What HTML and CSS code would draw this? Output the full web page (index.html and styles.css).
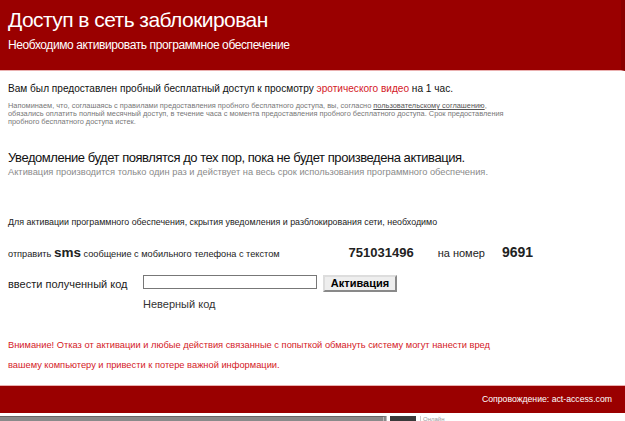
FILE: index.html
```html
<!DOCTYPE html>
<html lang="ru">
<head>
  <meta charset="UTF-8" />
  <title>Доступ в сеть заблокирован</title>
  <link rel="stylesheet" href="styles.css">
</head>
<body>
  <div class="header">
    <h1>Доступ в сеть заблокирован</h1>
    <p class="subtitle">Необходимо активировать программное обеспечение</p>
  </div>

  <div class="content">
    <p class="lead">Вам был предоставлен пробный бесплатный доступ к просмотру <span class="red">эротического видео</span> на 1 час.</p>
    <p class="note">
      Напоминаем, что, соглашаясь с правилами предоставления пробного бесплатного доступа, вы, согласно <a href="#">пользовательскому соглашению</a>,<br>
      обязались оплатить полный месячный доступ, в течение часа с момента предоставления пробного бесплатного доступа. Срок предоставления<br>
      пробного бесплатного доступа истек.
    </p>

    <p class="notice">Уведомление будет появлятся до тех пор, пока не будет произведена активация.</p>
    <p class="notice-sub">Активация производится только один раз и действует на весь срок использования программного обеспечения.</p>

    <p class="step">Для активации программного обеспечения, скрытия уведомления и разблокирования сети, необходимо</p>

    <div class="sms-row">
      <span>отправить <b class="sms">sms</b> сообщение с мобильного телефона с текстом</span>
      <b class="code">751031496</b>
      <span class="to">на номер</span>
      <b class="number">9691</b>
    </div>

    <div class="code-row">
      <label for="code">ввести полученный код</label>
      <div class="field">
        <div class="inputs">
          <input id="code" type="text">
          <button>Активация</button>
        </div>
        <div class="error">Неверный код</div>
      </div>
    </div>

    <p class="warning">
      Внимание! Отказ от активации и любые действия связанные с попыткой обмануть систему могут нанести вред<br>
      вашему компьютеру и привести к потере важной информации.
    </p>
  </div>

  <div class="footer">Сопровождение: act-access.com</div>

  <div class="taskbar">
    <div class="bar"></div>
    <div class="thumb"></div>
    <span class="online">Онлайн</span>
  </div>
</body>
</html>
```

FILE: styles.css
```css
body {
  margin: 0;
  font-family: "Liberation Sans", Arial, sans-serif;
  background: #fff;
  color: #222;
}
.header {
  box-sizing: border-box;
  height: 71px;
  background-color: #9a0000;
  color: #fff;
  padding: 5px 8px 0;
  border-bottom: 1px solid #eab0b0;
  border-right: 4px solid #8a0000;
}
h1 {
  margin: 0;
  font-size: 21px;
  letter-spacing: -0.55px;
  font-weight: normal;
  line-height: 30px;
}
.subtitle {
  margin: 3px 0 0;
  font-size: 12px;
  letter-spacing: -0.4px;
  line-height: 14px;
}
.content {
  padding: 11px 8px 0;
}
.lead {
  margin: 0;
  font-size: 10.1px;
  line-height: 14px;
  color: #111;
}
.red {
  color: #d4191f;
}
.note {
  margin: 6px 0 0;
  font-size: 7.4px;
  line-height: 8.2px;
  color: #777;
}
.note a {
  color: #555;
}
.notice {
  margin: 23px 0 0;
  font-size: 13px;
  letter-spacing: -0.45px;
  line-height: 16px;
  color: #111;
}
.notice-sub {
  margin: 0;
  font-size: 9.3px;
  line-height: 12px;
  color: #8a8a8a;
}
.step {
  margin: 38px 0 0;
  font-size: 8.9px;
  line-height: 12px;
  color: #222;
}
.sms-row {
  display: flex;
  align-items: baseline;
  margin-top: 16px;
  font-size: 9.2px;
  line-height: 16px;
  color: #222;
}
.sms {
  font-size: 13.5px;
}
.code {
  font-size: 13px;
  margin-left: 69px;
  margin-right: 24px;
}
.to {
  font-size: 11px;
}
.number {
  font-size: 14px;
  margin-left: 17px;
}
.code-row {
  display: flex;
  margin-top: 13px;
  font-size: 11px;
}
.code-row label {
  width: 135px;
  padding-top: 2px;
  line-height: 14px;
}
.inputs {
  display: flex;
  align-items: flex-start;
  gap: 6px;
}
input {
  box-sizing: border-box;
  width: 174px;
  height: 14px;
  padding: 0;
  border: 1px solid #777;
}
button {
  box-sizing: border-box;
  font-family: inherit;
  font-size: 11px;
  font-weight: bold;
  padding: 0;
  height: 17px;
  width: 74px;
  background: #eee;
  border: 2px outset #ddd;
}
.error {
  margin-top: 6px;
  line-height: 12px;
  color: #333;
}
.warning {
  margin: 25px 0 0;
  font-size: 9.3px;
  line-height: 20px;
  color: #d4191f;
}
.footer {
  margin-top: 10px;
  box-sizing: border-box;
  height: 28px;
  background-color: #9a0000;
  border-top: 1px solid #eab0b0;
  color: #fff;
  font-size: 8.7px;
  line-height: 27px;
  text-align: right;
  padding-right: 13px;
}
.taskbar {
  display: flex;
  align-items: stretch;
  margin-top: 3px;
  height: 7px;
  overflow: hidden;
  font-size: 6px;
  line-height: 7px;
  color: #999;
}
.bar {
  width: 383px;
  background: #8a8a8a;
  border-top: 1px solid #666;
  border-right: 4px double #bbb;
}
.thumb {
  width: 26px;
  margin-left: 3px;
  background: #3a3a3a;
}
.online {
  margin-left: 4px;
  border-left: 1px solid #ccc;
  padding-left: 2px;
}
```
